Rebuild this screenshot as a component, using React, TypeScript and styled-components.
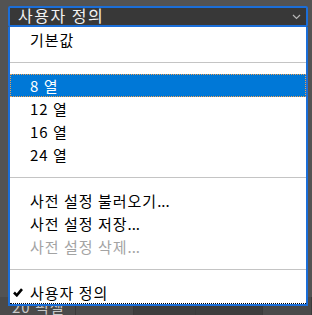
import React from 'react';
import styled, { createGlobalStyle } from 'styled-components';

const GlobalStyle = createGlobalStyle`
  html, body {
    margin: 0;
    padding: 0;
    background: #535353;
    overflow: hidden;
  }
  body {
    font-family: "Noto Sans CJK KR", "Noto Sans", sans-serif;
  }
`;

const Page = styled.div`
  position: relative;
  width: 312px;
  height: 315px;
  display: flex;
  flex-direction: column;
  box-sizing: border-box;
  padding-top: 6px;
`;

const SelectBox = styled.div`
  margin: 0 4px 0 8px;
  height: 21px;
  box-sizing: border-box;
  border: 2px solid #1b6ed8;
  border-radius: 2px;
  background: #383838;
  display: flex;
  align-items: center;
  padding: 0 4px 3px 8px;
  color: #f2f2f2;
  font-size: 16px;
  letter-spacing: 1.5px;
  line-height: 1;
`;

const SelectValue = styled.span`
  flex: 1;
`;

const Chevron = styled.svg`
  width: 9px;
  height: 6px;
  margin: 3px 1px 0 0;
`;

const Filler = styled.div`
  flex: 1;
`;

const BottomRow = styled.div`
  height: 18px;
  display: flex;
  align-items: flex-end;
  background: #4a4a4a;
  color: #c8c8c8;
  font-size: 15px;
`;

const Cell = styled.div<{ $w: number; $dark?: boolean }>`
  width: ${(p) => p.$w}px;
  height: 100%;
  box-sizing: border-box;
  display: flex;
  align-items: flex-end;
  padding-left: 12px;
  line-height: 16px;
  letter-spacing: 1px;
  background: ${(p) => (p.$dark ? '#3e3e3e' : 'transparent')};
  border-right: 1px solid #3a3a3a;
`;

const Menu = styled.div`
  position: absolute;
  top: 27px;
  left: 8px;
  width: 300px;
  box-sizing: border-box;
  background: #ffffff;
  border: 2px solid #1b6ed8;
  border-top: none;
  padding-top: 1px;
`;

const Item = styled.div<{ $selected?: boolean; $disabled?: boolean; $focused?: boolean }>`
  height: 23px;
  box-sizing: border-box;
  display: flex;
  align-items: center;
  padding-left: 20px;
  font-size: 15px;
  letter-spacing: 1px;
  line-height: 1;
  color: ${(p) => (p.$selected ? '#ffffff' : p.$disabled ? '#a3a3a3' : '#000000')};
  background: ${(p) => (p.$selected ? '#0078d7' : 'transparent')};
  outline: ${(p) => (p.$selected ? '1px dotted #f0a050' : 'none')};
  outline-offset: -1px;
  border-bottom: ${(p) => (p.$focused ? '1px dotted #000' : 'none')};
  position: relative;
`;

const Ellipsis = styled.span`
  letter-spacing: 0;
`;

const Check = styled.svg`
  position: absolute;
  left: 3px;
  top: 7px;
  width: 10px;
  height: 9px;
`;

const Separator = styled.div`
  height: 23px;
  display: flex;
  align-items: center;

  &::after {
    content: '';
    flex: 1;
    height: 1px;
    background: #c4c4c4;
  }
`;

export default function App() {
  return (
    <>
      <GlobalStyle />
      <Page>
        <SelectBox>
          <SelectValue>사용자 정의</SelectValue>
          <Chevron viewBox="0 0 9 6">
            <path d="M1 1 L4.5 4.5 L8 1" fill="none" stroke="#b8b8b8" strokeWidth="1.2" />
          </Chevron>
        </SelectBox>
        <Filler />
        <BottomRow>
          <Cell $w={76}>20 픽셀</Cell>
          <Cell $w={58} />
          <Cell $w={62} $dark />
          <Cell $w={67} $dark />
          <Cell $w={49} />
        </BottomRow>

        <Menu>
          <Item>기본값</Item>
          <Separator />
          <Item $selected>8 열</Item>
          <Item>12 열</Item>
          <Item>16 열</Item>
          <Item>24 열</Item>
          <Separator />
          <Item>사전 설정 불러오기<Ellipsis>...</Ellipsis></Item>
          <Item>사전 설정 저장<Ellipsis>...</Ellipsis></Item>
          <Item $disabled>사전 설정 삭제<Ellipsis>...</Ellipsis></Item>
          <Separator />
          <Item $focused>
            <Check viewBox="0 0 10 9">
              <path d="M1 4.5 L3.8 7.3 L9 1.2" fill="none" stroke="#000" strokeWidth="2.6" />
            </Check>
            사용자 정의
          </Item>
        </Menu>
      </Page>
    </>
  );
}
